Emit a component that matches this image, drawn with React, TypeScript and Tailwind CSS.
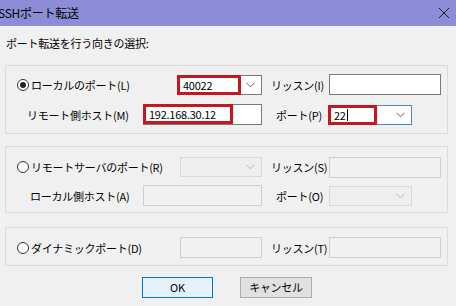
import React from "react";

const FONT = "'Noto Sans CJK JP', 'Noto Sans', sans-serif";

const Chevron = ({ light }: { light?: boolean }) => (
  <svg width="9" height="6" viewBox="0 0 9 6" className="shrink-0">
    <polyline
      points="0.5,0.8 4.5,4.8 8.5,0.8"
      fill="none"
      stroke={light ? "#b8b8b8" : "#606060"}
      strokeWidth="1"
    />
  </svg>
);

const Radio = ({ checked }: { checked?: boolean }) => (
  <span className="w-[12px] h-[12px] rounded-full border border-[#333333] bg-white flex items-center justify-center shrink-0">
    {checked && <span className="w-[6px] h-[6px] rounded-full bg-[#222222]" />}
  </span>
);

const Combo = ({
  w,
  disabled,
  focus,
  children,
}: {
  w: string;
  disabled?: boolean;
  focus?: boolean;
  children?: React.ReactNode;
}) => (
  <div
    className={`relative shrink-0 ${w} h-[20px] border flex items-center justify-end pr-[6px] ${
      disabled
        ? "bg-[#eeeeee] border-[#d9d9d9]"
        : focus
        ? "bg-white border-[#4f87b8]"
        : "bg-white border-[#7a7a7a]"
    }`}
  >
    {children}
    <Chevron light={disabled} />
  </div>
);

const Field = ({
  w,
  disabled,
  children,
}: {
  w: string;
  disabled?: boolean;
  children?: React.ReactNode;
}) => (
  <div
    className={`relative shrink-0 ${w} h-[21px] border ${
      disabled ? "bg-[#f0f0f0] border-[#cfcfcf]" : "bg-white border-[#7a7a7a]"
    }`}
  >
    {children}
  </div>
);

const RedBox = ({ w, children }: { w: string; children: React.ReactNode }) => (
  <div
    className={`absolute left-[-1px] top-[-1px] ${w} h-[20px] border-[3px] border-[#c8161e] flex items-center pl-[3px] text-[11px] text-black whitespace-nowrap`}
  >
    {children}
  </div>
);

const Label = ({ className, children }: { className: string; children: React.ReactNode }) => (
  <span className={`shrink-0 whitespace-nowrap ${className}`}>{children}</span>
);

export default function App() {
  return (
    <div
      className="w-[456px] h-[306px] bg-[#f0f0f0] overflow-hidden flex flex-col text-[11px] text-black leading-[14px] tracking-[-0.25px]"
      style={{ fontFamily: FONT }}
    >
      {/* title bar */}
      <div className="h-[26px] shrink-0 bg-[#8c8cd7] flex items-center justify-between pr-[6px]">
        <span className="text-[12px] ml-[-2px] whitespace-nowrap">SSHポート転送</span>
        <svg width="12" height="12" viewBox="0 0 12 12">
          <path d="M1 1 L11 11 M11 1 L1 11" stroke="#1a1a2e" strokeWidth="1" />
        </svg>
      </div>

      <div className="mt-[10px] ml-[6px] h-[14px] whitespace-nowrap">ポート転送を行う向きの選択:</div>

      {/* local port */}
      <div className="mt-[15px] ml-[5px] w-[443px] h-[69px] border border-[#dcdcdc] flex flex-col pt-[8px]">
        <div className="flex items-center h-[21px]">
          <div className="w-[171px] shrink-0 pl-[11px] flex items-center gap-[2px] whitespace-nowrap">
            <Radio checked />
            <span>ローカルのポート(L)</span>
          </div>
          <Combo w="w-[85px]">
            <RedBox w="w-[64px]">40022</RedBox>
          </Combo>
          <Label className="ml-[9px] w-[58px]">リッスン(I)</Label>
          <Field w="w-[112px]" />
        </div>
        <div className="flex items-center h-[21px] mt-[9px]">
          <Label className="w-[137px] pl-[21px]">リモート側ホスト(M)</Label>
          <Field w="w-[119px]">
            <RedBox w="w-[90px]">192.168.30.12</RedBox>
          </Field>
          <Label className="ml-[14px] w-[52px]">ポート(P)</Label>
          <Combo w="w-[84px]" focus>
            <RedBox w="w-[49px]">
              22<span className="inline-block w-px h-[12px] bg-black ml-px" />
            </RedBox>
          </Combo>
        </div>
      </div>

      {/* remote port */}
      <div className="mt-[12px] ml-[5px] w-[443px] h-[67px] border border-[#dcdcdc] flex flex-col pt-[10px]">
        <div className="flex items-center h-[20px]">
          <div className="w-[174px] shrink-0 pl-[11px] flex items-center gap-[2px] whitespace-nowrap">
            <Radio />
            <span>リモートサーバのポート(R)</span>
          </div>
          <Combo w="w-[82px]" disabled />
          <Label className="ml-[9px] w-[58px]">リッスン(S)</Label>
          <Field w="w-[112px]" disabled />
        </div>
        <div className="flex items-center h-[21px] mt-[8px]">
          <Label className="w-[137px] pl-[24px]">ローカル側ホスト(A)</Label>
          <Field w="w-[119px]" disabled />
          <Label className="ml-[14px] w-[53px]">ポート(O)</Label>
          <Combo w="w-[83px]" disabled />
        </div>
      </div>

      {/* dynamic port */}
      <div className="mt-[14px] ml-[5px] w-[443px] h-[39px] border border-[#dcdcdc] flex flex-col pt-[9px]">
        <div className="flex items-center h-[21px]">
          <div className="w-[174px] shrink-0 pl-[11px] flex items-center gap-[2px] whitespace-nowrap">
            <Radio />
            <span>ダイナミックポート(D)</span>
          </div>
          <Field w="w-[82px]" disabled />
          <Label className="ml-[9px] w-[58px]">リッスン(T)</Label>
          <Field w="w-[112px]" disabled />
        </div>
      </div>

      {/* buttons */}
      <div className="mt-[11px] flex gap-[27px] pl-[142px]">
        <button className="w-[71px] h-[21px] border border-[#0078d7] bg-[#e5f1fb] text-[11px] leading-none">
          OK
        </button>
        <button className="w-[72px] h-[21px] border border-[#adadad] bg-[#e1e1e1] text-[11px] leading-none">
          キャンセル
        </button>
      </div>
    </div>
  );
}
